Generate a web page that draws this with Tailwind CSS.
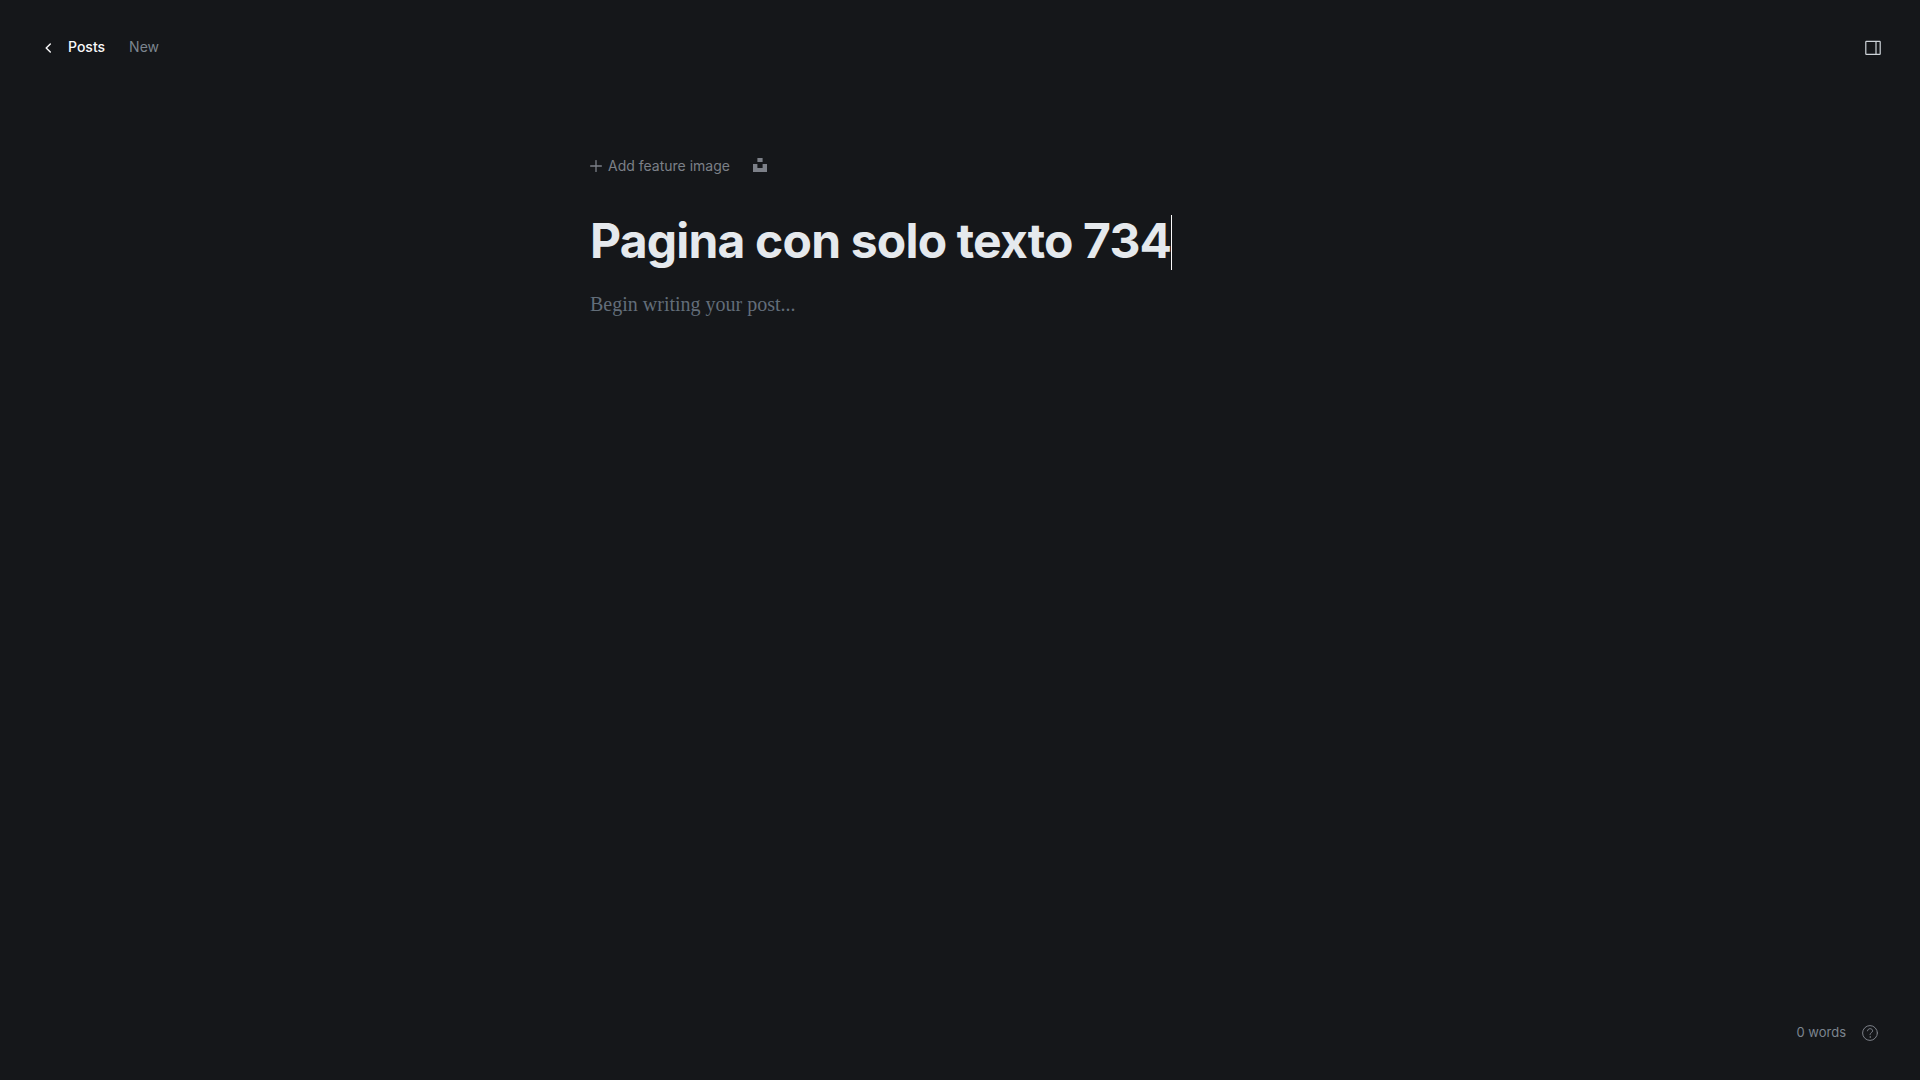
<!DOCTYPE html>
<html lang="en">
<head>
<meta charset="utf-8">
<title>New post</title>
<script src="https://cdn.jsdelivr.net/npm/@tailwindcss/browser@4"></script>
</head>
<body class="flex min-h-screen flex-col bg-[#15171a] font-['Inter',sans-serif] text-sm">
<header class="flex items-start justify-between pt-[31px] pr-[31px] pl-[33px]">
  <nav class="flex items-center gap-6 leading-8">
    <a href="#" class="flex h-8 items-center pl-[11px] font-medium text-[#fafafb]">
      <svg class="mt-px mr-4 h-[10px] w-2" viewBox="0 0 8 10" fill="none" stroke="currentColor" stroke-width="1.4" stroke-linecap="round" stroke-linejoin="round"><path d="M6.3.9 2.2 5l4.1 4.1"/></svg>
      Posts
    </a>
    <span class="text-[#7c858f]">New</span>
  </nav>
  <button type="button" aria-label="Settings" class="mt-px flex h-8 w-8 items-center justify-center text-[#ced4d9]">
    <svg class="h-4 w-4" viewBox="0 0 16 16" fill="none" stroke="currentColor" stroke-width="1.2"><rect x=".8" y="1.3" width="14.4" height="13" rx=".6"/><path d="M11 1.3v13"/></svg>
  </button>
</header>
<main class="mx-auto flex w-full max-w-[740px] grow flex-col pt-[86px]">
  <div class="flex h-8 items-center gap-[23px] text-[#7c8088]">
    <button type="button" class="flex items-center gap-[6px]">
      <svg class="h-3 w-3" viewBox="0 0 12 12" fill="none" stroke="currentColor" stroke-width="1.3" stroke-linecap="round"><path d="M6 .6v10.8M.6 6h10.8"/></svg>
      Add feature image
    </button>
    <button type="button" aria-label="Unsplash" class="pb-[2px]"><svg class="h-[14px] w-[14px]" viewBox="0 0 14 14" fill="currentColor"><path d="M4.4 0h5.2v3.9H4.4zM9.6 6.1H14V14H0V6.1h4.4V10h5.2z"/></svg></button>
  </div>
  <div class="mt-[33px] flex h-[55px] items-start">
    <input aria-label="Post title" value="Pagina con solo texto 734" class="-mt-1 field-sizing-content h-[59px] bg-transparent text-5xl leading-[59px] font-bold tracking-[-0.017em] text-[#e5e9ed] outline-none">
    <span class="h-[55px] w-px bg-[#fafafb]"></span>
  </div>
  <textarea aria-label="Post body" placeholder="Begin writing your post..." class="mt-[18px] grow resize-none bg-transparent font-['Liberation_Serif',serif] text-xl leading-8 text-[#e5e9ed] outline-none placeholder:text-[#626d79]"></textarea>
</main>
<footer class="flex items-center justify-end gap-4 px-[42px] pb-8">
  <span class="text-[13px] leading-8 text-[#7c858f]">0 words</span>
  <a href="#" aria-label="Help" class="pt-[2px] text-[#7c8088]">
    <svg class="h-4 w-4" viewBox="0 0 16 16" fill="none" stroke="currentColor" stroke-linecap="round" stroke-linejoin="round"><circle cx="8" cy="8" r="7.4"/><path d="M5.5 5.8c.2-1.3 1.2-2.1 2.6-2.1 1.500 0 2.500.9 2.500 2.100 0 1.900-2.500 1.900-2.500 3.700v.2"/><circle cx="8.100" cy="12" r=".2"/></svg>
  </a>
</footer>
</body>
</html>
